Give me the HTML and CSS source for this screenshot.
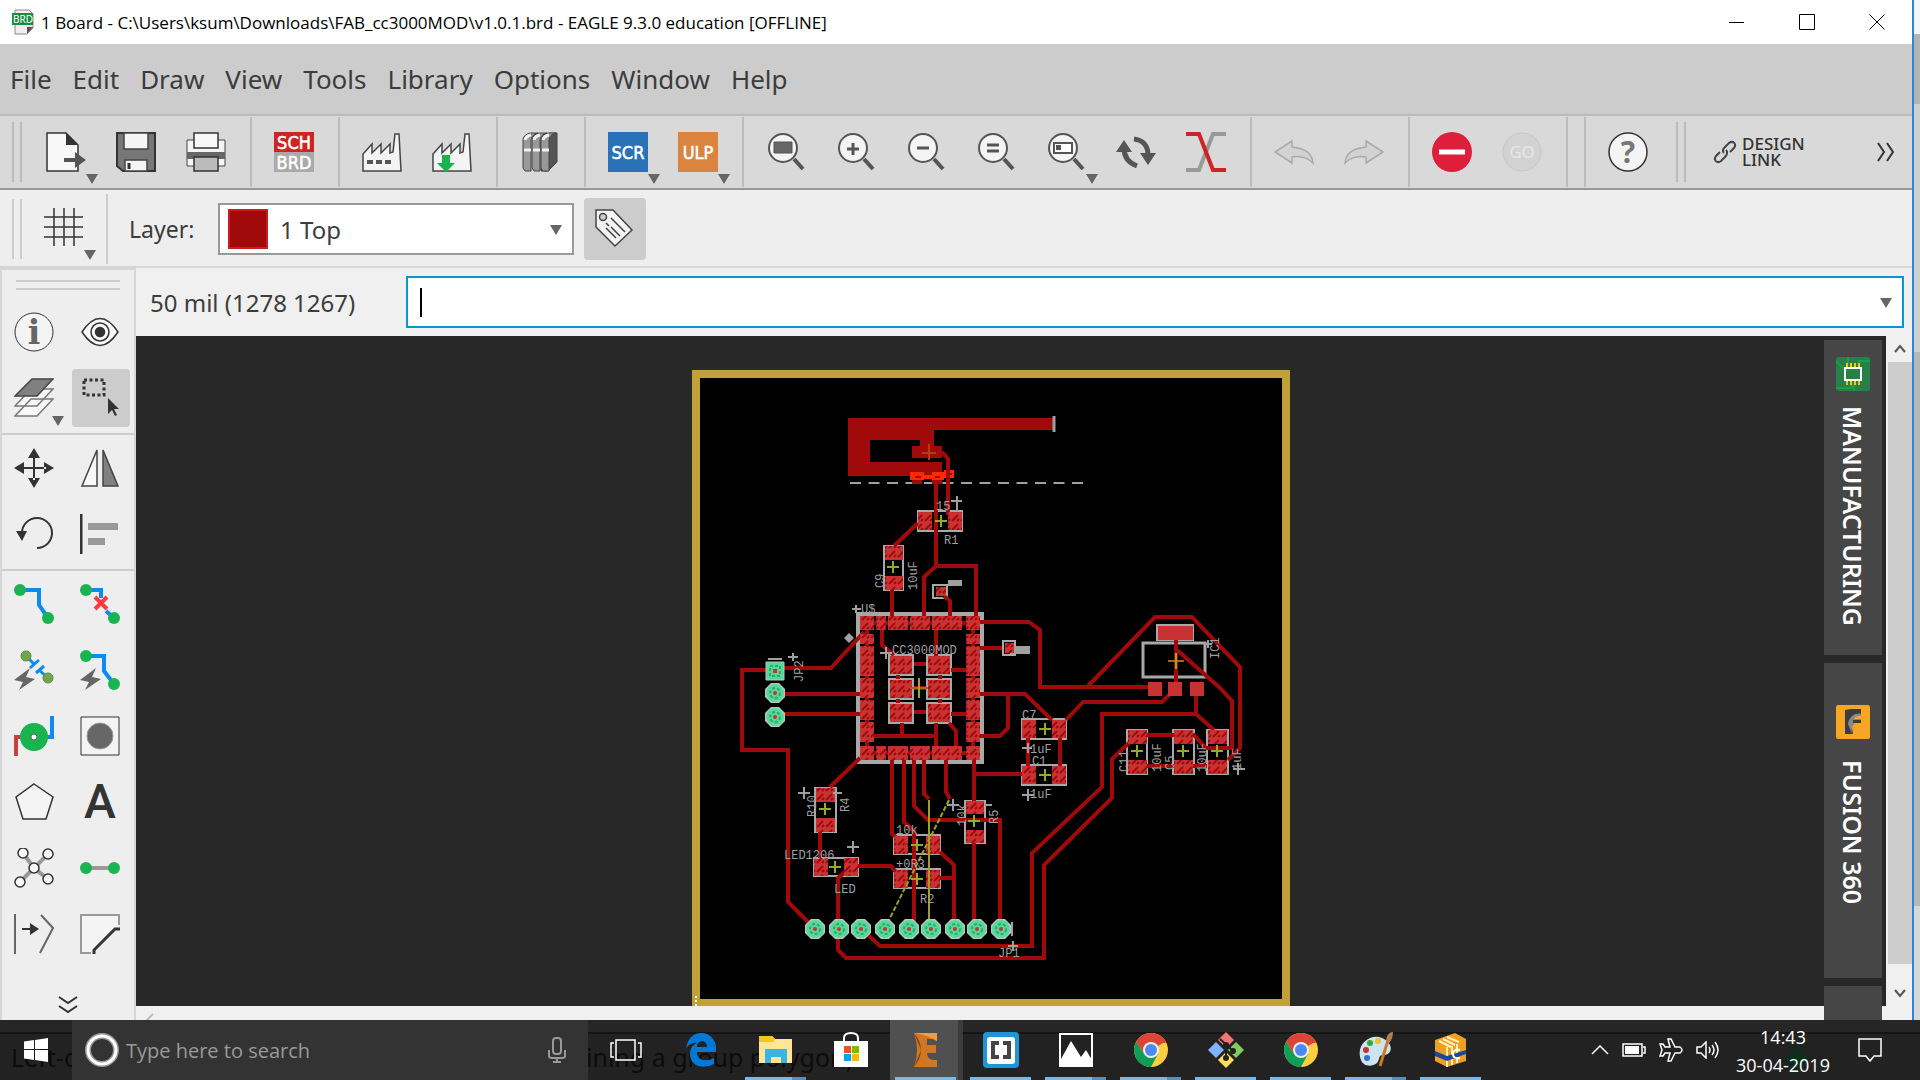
FILE: index.html
```html
<!doctype html>
<html lang="en">

<head>
  <meta charset="utf-8">
  <title>1 Board - EAGLE</title>
  <link rel="stylesheet" href="styles.css">
</head>

<body>
  <svg class="defs" aria-hidden="true">
    <symbol id="lens" viewBox="0 0 40 40">
      <circle cx="17" cy="16" r="14" fill="#f4f4f4" stroke="#555" stroke-width="2"/>
      <path d="M28 27l9 10" stroke="#555" stroke-width="4"/>
    </symbol>
    <symbol id="factory" viewBox="0 0 40 40">
      <path d="M1 39V22L10 12v9l9-9v9l9-9v9l3-1 2-18h4l2 37z" fill="#f4f4f4" stroke="#444" stroke-width="1.5"/>
    </symbol>
    <symbol id="chrome" viewBox="0 0 34 34">
      <circle cx="17" cy="17" r="17" fill="#ffcd40"/>
      <path d="M17 17L2.300 8.500A17 17 0 0 1 31.700 8.500z" fill="#dc4437"/>
      <path d="M2.300 8.500A17 17 0 0 0 17 34L24 21H10z" fill="#109d58"/>
      <path d="M2.300 8.500L10 21l7-11h15l-1-2z" fill="#dc4437"/>
      <circle cx="17" cy="17" r="8" fill="#eee"/>
      <circle cx="17" cy="17" r="6" fill="#4a8af4"/>
    </symbol>
    <symbol id="via" viewBox="-11 -11 22 22">
      <path d="M-4-10h8l6 6v8l-6 6h-8l-6-6v-8z" fill="#b8c8c0"/>
      <circle r="9" fill="#56d898"/>
      <circle r="5" fill="none" stroke="#2fa86f" stroke-width="2" stroke-dasharray="3 2"/>
      <circle r="2" fill="#c83232"/>
    </symbol>
    <symbol id="cross" viewBox="-6 -6 12 12">
      <path d="M-6 0H6M0-6V6" stroke="#96aa28" stroke-width="2"/>
    </symbol>
  </svg>

  <div class="desktop">
    <div class="window">
      <header class="titlebar">
        <svg class="doc-icon" width="22" height="26" viewBox="0 0 22 26">
          <path d="M3 1h14l4 4v14l-6 6H3z" fill="#eee" stroke="#888"/>
          <path d="M21 18h-6v7z" fill="#555"/>
          <rect y="4" width="21" height="12" fill="#1a8c42"/>
          <text x="1" y="14" font-size="10" fill="#fff">BRD</text>
        </svg>
        <h1>1 Board - C:\Users\ksum\Downloads\FAB_cc3000MOD\v1.0.1.brd - EAGLE 9.3.0 education [OFFLINE]</h1>
        <div class="window-buttons">
          <button aria-label="Minimize"><svg width="16" height="16"><path d="M0 8.500h15" stroke="#000"/></svg></button>
          <button aria-label="Maximize"><svg width="16" height="16"><path d="M.5.5h15v15H.5z" fill="none" stroke="#000"/></svg></button>
          <button aria-label="Close"><svg width="16" height="16"><path d="M.5.5l15 15M15.500.5l-15 15" stroke="#000"/></svg></button>
        </div>
      </header>

      <nav class="menubar">
        <button>File</button>
        <button>Edit</button>
        <button>Draw</button>
        <button>View</button>
        <button>Tools</button>
        <button>Library</button>
        <button>Options</button>
        <button>Window</button>
        <button>Help</button>
      </nav>

      <div class="toolbar">
        <div class="grip"></div>
        <div class="group">
          <button class="tool drop" aria-label="New"><svg viewBox="0 0 40 40"><path d="M1 1h19l12 12v26H1z" fill="#f8f8f8" stroke="#333" stroke-width="1.500"/><path d="M20 1l12 12H20z" fill="#333"/><path d="M18 26h11v-6l11 8-11 8v-6H18z" fill="#555"/></svg></button>
          <button class="tool" aria-label="Save"><svg viewBox="0 0 40 40"><path d="M1 1h38v38H7l-6-5z" fill="#777" stroke="#333" stroke-width="2"/><path d="M8 1h24v16H8zM9 28h22v11H9z" fill="#f4f4f4" stroke="#444" stroke-width="1.500"/><path d="M13 31v6" stroke="#333" stroke-width="3"/></svg></button>
          <button class="tool" aria-label="Print"><svg viewBox="0 0 40 40"><path d="M1 8h38v26H1z" fill="#f4f4f4" stroke="#444"/><path d="M1 20h38v7H1z" fill="#666"/><path d="M8 1h24v15H8z" fill="#f8f8f8" stroke="#333" stroke-width="1.500"/><path d="M8 25h24v14H8z" fill="#bbb" stroke="#333" stroke-width="1.500"/></svg></button>
        </div>
        <div class="group">
          <button class="tool" aria-label="Schematic"><svg viewBox="0 0 40 40"><path d="M0 0h40v20H0z" fill="#cf2424"/><path d="M0 20h40v20H0z" fill="#aaa"/><g class="pixel-label" font-size="18"><text x="20" y="17">SCH</text><text x="20" y="37">BRD</text></g></svg></button>
        </div>
        <div class="group">
          <button class="tool" aria-label="CAM processor"><svg viewBox="0 0 40 40"><use href="#factory"/><path d="M5 30h24" stroke="#555" stroke-width="4" stroke-dasharray="6 3"/></svg></button>
          <button class="tool" aria-label="Export CAM"><svg viewBox="0 0 40 40"><use href="#factory"/><path d="M10 23h8v8h5l-9 9-9-9h5z" fill="#18b450"/></svg></button>
        </div>
        <div class="group">
          <button class="tool" aria-label="Library"><svg viewBox="0 0 40 40" stroke="#444"><path d="M21 8l9-7h7v29l-9 9h-7z" fill="#555"/><path d="M3 8q0-5 7-7h8q-7 2-7 7v31H5l-2-3zM12 8q0-5 7-7h8q-7 2-7 7v31h-6l-2-3zM21 8q0-5 7-7h8q-7 2-7 7v31h-6l-2-3z" fill="#999"/><path d="M5 8q1-4 6-5M14 8q1-4 6-5M23 8q1-4 6-5" fill="none" stroke="#f0f0f0" stroke-width="3"/><path d="M4 18h7M13 18h7M22 18h7" stroke="#f0f0f0" stroke-width="3"/></svg></button>
        </div>
        <div class="group">
          <button class="tool drop" aria-label="Run script"><svg viewBox="0 0 40 40"><path d="M0 0h40v40H0z" fill="#2a72b8"/><text class="pixel-label" x="20" y="27" font-size="18">SCR</text></svg></button>
          <button class="tool drop" aria-label="Run ULP"><svg viewBox="0 0 40 40"><path d="M0 0h40v40H0z" fill="#db8440"/><text class="pixel-label" x="20" y="27" font-size="18">ULP</text></svg></button>
        </div>
        <div class="group">
          <button class="tool" aria-label="Fit"><svg viewBox="0 0 40 40"><use href="#lens"/><path d="M8 10h18v11H8z" fill="#666" stroke="#555"/></svg></button>
          <button class="tool" aria-label="Zoom in"><svg viewBox="0 0 40 40"><use href="#lens"/><path d="M11 17h12M17 11v12" stroke="#555" stroke-width="3"/></svg></button>
          <button class="tool" aria-label="Zoom out"><svg viewBox="0 0 40 40"><use href="#lens"/><path d="M11 16h12" stroke="#555" stroke-width="3"/></svg></button>
          <button class="tool" aria-label="Redraw"><svg viewBox="0 0 40 40"><use href="#lens"/><path d="M11 13h12M11 19h12" stroke="#555" stroke-width="3"/></svg></button>
          <button class="tool drop" aria-label="Select zoom"><svg viewBox="0 0 40 40"><use href="#lens"/><path d="M8 11h18v10H8z" fill="#fff" stroke="#555" stroke-width="2"/><path d="M10 13h5v5h-5z" fill="#555"/></svg></button>
          <button class="tool" aria-label="Refresh"><svg viewBox="0 0 40 40"><path d="M8 16c0 9 5 15 13 18M18 7c9 1 14 7 14 16" fill="none" stroke="#555" stroke-width="5"/><path d="M0 20L8 8l8 12zM24 21h16l-8 12z" fill="#555"/></svg></button>
          <button class="tool" aria-label="Ratsnest"><svg viewBox="0 0 40 40" fill="none" stroke-width="4"><path d="M0 38h13L27 2h13" stroke="#999"/><path d="M0 2h13l14 36h13" stroke="#cf2424"/></svg></button>
        </div>
        <div class="group">
          <button class="tool" aria-label="Undo" disabled><svg viewBox="0 0 40 40"><path d="M1 20L18 9v6q20 2 21 16-8-8-21-6v6z" fill="#d2d2d2" stroke="#aaa" stroke-width="1.500"/></svg></button>
          <button class="tool" aria-label="Redo" disabled><svg viewBox="0 0 40 40"><path d="M39 20L22 9v6Q2 17 1 31q8-8 21-6v6z" fill="#d2d2d2" stroke="#aaa" stroke-width="1.500"/></svg></button>
        </div>
        <div class="group">
          <button class="tool" aria-label="Stop"><svg viewBox="0 0 40 40"><circle cx="20" cy="20" r="20" fill="#de1f3c"/><path d="M7 20h26" stroke="#fff" stroke-width="5"/></svg></button>
          <button class="tool" aria-label="Go" disabled><svg viewBox="0 0 40 40"><circle cx="20" cy="20" r="19" fill="#d2d2d2" stroke="#c6c6c6"/><text x="20" y="26" font-size="17" text-anchor="middle" fill="#e8e8e8">GO</text></svg></button>
        </div>
        <div class="group empty"></div>
        <div class="group last">
          <button class="tool" aria-label="Help"><svg viewBox="0 0 40 40"><circle cx="20" cy="20" r="19" fill="#f4f4f4" stroke="#333" stroke-width="1.500"/><text x="20" y="31" font-size="30" font-weight="bold" text-anchor="middle" fill="#777">?</text></svg></button>
        </div>
        <div class="grip"></div>
        <button class="design-link">
          <svg width="24" height="24" viewBox="0 0 24 24" fill="none" stroke="#444" stroke-width="2"><path d="M11 13c-2-2-1-4 1-6l4-4c4-3 8 1 5 5l-4 4M13 10c2 2 1 5-1 7l-4 4c-4 3-8-1-5-5l4-4"/></svg>
          <span>DESIGN<br>LINK</span>
        </button>
        <button class="more" aria-label="More"><svg width="18" height="20" viewBox="0 0 18 20" fill="none" stroke="#333" stroke-width="2"><path d="M1 1l6 9-6 9M10 1l6 9-6 9"/></svg></button>
      </div>

      <div class="layerbar">
        <div class="grip"></div>
        <button class="tool drop grid-tool" aria-label="Grid"><svg viewBox="0 0 40 40"><path d="M11 1v38M21 1v38M31 1v38M1 10h39M1 20h39M1 30h39" stroke="#333" stroke-width="1.500"/></svg></button>
        <label for="layer">Layer:</label>
        <div class="layer-box">
          <span class="swatch"></span>
          <select id="layer"><option>1 Top</option></select>
        </div>
        <button class="tag" aria-label="Tags"><svg width="40" height="40" viewBox="0 0 40 40" fill="#f4f4f4" stroke="#444" stroke-width="1.500"><path d="M2 2h17l19 20-17 16L2 19z"/><circle cx="9" cy="9" r="3.500" fill="#ccc"/><path d="M17 10l14 14M12 15l3 3M17 19l9 9M12 20l10 10"/></svg></button>
      </div>

      <div class="workspace">
        <aside class="palette">
          <div class="palette-grip"></div>
          <div class="tools">
            <button aria-label="Info"><svg viewBox="0 0 40 40"><circle cx="20" cy="20" r="19" fill="#f4f4f4" stroke="#333"/><text x="20" y="32" font-family="DejaVu Serif" font-size="33" font-weight="bold" text-anchor="middle" fill="#666">i</text></svg></button>
            <button aria-label="Show"><svg viewBox="0 0 40 40" fill="#f8f8f8" stroke="#333" stroke-width="1.500"><path d="M2 20Q20-7 38 20 20 47 2 20z"/><circle cx="20" cy="20" r="9"/><circle cx="20" cy="20" r="4.500" fill="#333"/></svg></button>
            <button class="drop" aria-label="Layers"><svg viewBox="0 0 40 40" fill="#f8f8f8" stroke="#777" stroke-width="1.500"><path d="M1 38l16-17h22L23 38zM1 28l16-17h22L23 28z"/><path d="M1 18L18 1h21L23 18z" fill="#808080" stroke="#444"/></svg></button>
            <button class="on" aria-label="Group"><svg viewBox="0 0 40 40"><path d="M4 2h20v15H4z" fill="none" stroke="#333" stroke-width="3" stroke-dasharray="3 2.500"/><path d="M28 20v16l4-4 3 6 2-1-3-6h5z" fill="#333"/></svg></button>
          </div>
          <div class="tools">
            <button aria-label="Move"><svg viewBox="0 0 40 40" fill="#333"><path d="M19 8h2v24h-2zM8 19h24v2H8zM20 0l6 10H14zM20 40l6-10H14zM0 20l10-6v12zM40 20l-10-6v12z"/></svg></button>
            <button aria-label="Mirror"><svg viewBox="0 0 40 40" stroke="#444" stroke-width="1.500"><path d="M17 2v36H2z" fill="#f8f8f8"/><path d="M23 2v36h15z" fill="#808080"/></svg></button>
            <button aria-label="Rotate"><svg viewBox="0 0 40 40"><path d="M8 19a15 15 0 1 1 15 15" fill="none" stroke="#333" stroke-width="2"/><path d="M2 17h11L8 27z" fill="#333"/></svg></button>
            <button aria-label="Align"><svg viewBox="0 0 40 40"><path d="M1 0v40" stroke="#333" stroke-width="3"/><path d="M8 9h30v7H8zM8 24h17v7H8z" fill="#999"/></svg></button>
          </div>
          <div class="tools">
            <button aria-label="Route"><svg viewBox="0 0 40 40"><path d="M6 6h19v15l9 13" fill="none" stroke="#0a8cf0" stroke-width="4"/><g fill="#18b450"><circle cx="6" cy="6" r="6"/><circle cx="34" cy="34" r="6"/></g></svg></button>
            <button aria-label="Ripup"><svg viewBox="0 0 40 40"><path d="M6 6h15v8m5 13l8 7" fill="none" stroke="#0a8cf0" stroke-width="4"/><g fill="#18b450"><circle cx="6" cy="6" r="6"/><circle cx="34" cy="34" r="6"/></g><path d="M15 13l12 12M27 13L15 25" stroke="#ff3b3b" stroke-width="4"/></svg></button>
            <button aria-label="Fanout"><svg viewBox="0 0 40 40"><path d="M12 6l8 8m5 6l9 8M16 18l9-8M22 23l8-7" stroke="#0a8cf0" stroke-width="3"/><g fill="#70a848" stroke="#608840"><circle cx="12" cy="6" r="5"/><circle cx="34" cy="28" r="5"/></g><path d="M16 18L0 30l9 2-4 8 16-11-9-2z" fill="#666"/></svg></button>
            <button aria-label="Autorouter"><svg viewBox="0 0 40 40"><path d="M6 6h18v15l10 13" fill="none" stroke="#0a8cf0" stroke-width="4"/><g fill="#18b450"><circle cx="6" cy="6" r="6"/><circle cx="34" cy="34" r="6"/></g><path d="M16 18L0 30l9 2-4 8 16-11-9-2z" fill="#666"/></svg></button>
            <button aria-label="Via"><svg viewBox="0 0 40 40" fill="none" stroke-width="4"><path d="M2 40V21h8" stroke="#c84040"/><path d="M38 0v21h-8" stroke="#0a8cf0"/><circle cx="20" cy="21" r="14" fill="#18b450"/><circle cx="20" cy="21" r="3" fill="#fff" stroke="#6a7040" stroke-width="1"/></svg></button>
            <button aria-label="Hole"><svg viewBox="0 0 40 40"><path d="M1 1h38v38H1z" fill="#f4f4f4" stroke="#333"/><circle cx="20" cy="20" r="13" fill="#666" stroke="#999"/></svg></button>
            <button aria-label="Polygon"><svg viewBox="0 0 40 40"><path d="M20 2l19 13-7 22H9L2 15z" fill="#f4f4f4" stroke="#333" stroke-width="1.500"/></svg></button>
            <button class="letter" aria-label="Text">A</button>
            <button aria-label="Ratsnest"><svg viewBox="0 0 40 40"><path d="M9 5l11 15L6 34M34 6L20 20l14 11" fill="none" stroke="#999" stroke-width="4"/><g fill="#f8f8f8" stroke="#333" stroke-width="1.500"><circle cx="9" cy="5" r="5"/><circle cx="34" cy="6" r="5"/><circle cx="20" cy="20" r="5"/><circle cx="6" cy="34" r="5"/><circle cx="34" cy="31" r="5"/></g></svg></button>
            <button aria-label="Signal"><svg viewBox="0 0 40 40"><path d="M6 20h28" stroke="#999" stroke-width="4"/><g fill="#18b450"><circle cx="6" cy="20" r="6"/><circle cx="34" cy="20" r="6"/></g></svg></button>
            <button aria-label="Split"><svg viewBox="0 0 40 40" fill="none" stroke="#666" stroke-width="2"><path d="M1 0v40M27 1l12 13-13 25"/><path d="M8 15h10" stroke="#333"/><path d="M16 9l9 6-9 6z" fill="#333" stroke="none"/></svg></button>
            <button aria-label="Miter"><svg viewBox="0 0 40 40" fill="none"><path d="M39 11V1H1v38h10" fill="#f4f4f4" stroke="#999" stroke-width="2"/><path d="M14 40v-4l21-21h5" stroke="#333" stroke-width="3"/></svg></button>
          </div>
          <button class="more-tools" aria-label="More tools"><svg width="20" height="18" viewBox="0 0 20 18" fill="none" stroke="#333" stroke-width="2"><path d="M1 1l9 6 9-6M1 10l9 6 9-6"/></svg></button>
        </aside>

        <main class="editor">
          <div class="command-row">
            <label for="command">50 mil (1278 1267)</label>
            <div class="command-box"><input id="command" type="text"><span class="caret"></span></div>
          </div>
          <div class="view">
            <div class="canvas">
              <svg class="board" width="620" height="646" viewBox="0 0 620 646">
                <defs>
                  <pattern id="hatch" width="9" height="9" patternUnits="userSpaceOnUse">
                    <path d="M0 0h9v9H0z" fill="#c83232"/>
                    <path d="M1 8l6-6M6 8l2-2" stroke="#a00a0a" stroke-width="2"/>
                  </pattern>
                </defs>
                <path d="M6 14H596V643H6z" fill="#000" stroke="#c0a038" stroke-width="8"/>
                <path d="M6 636v10" stroke="#fff" stroke-width="2" stroke-dasharray="2 2"/>

                <!-- antenna -->
                <path d="M158 58H364V70H244V86H252V98H222V86H230V80H180V102H252V116H158z" fill="#a00a0a"/>
                <path d="M364 56v16" stroke="#a0a0a0" stroke-width="3"/>
                <path d="M160 123H394" stroke="#a0a0a0" stroke-width="2" stroke-dasharray="11 7.500"/>
                <path d="M222 118h10v6h-10zM242 118h10v6h-10z" fill="#a00a0a"/>
                <path d="M220 112h14v8h-14zM242 112h12v8h-12zM254 110h10v8h-10zM232 115h12v4h-12z" fill="#ff2a00"/>
                <path d="M225 117h6M245 117h5M256 114h6" stroke="#a00a0a" stroke-width="2"/>
                <path d="M232 93h14M239 84v16" stroke="#b83c10" stroke-width="2"/>

                <!-- package outlines -->
                <g fill="none" stroke="#a8a8a8" stroke-width="2">
                  <path d="M228 151h44v20h-44zM194 186h19v44h-19zM243 225h14v13h-14zM125 428h21v44h-21zM124 498h44v18h-44zM204 475h46v19h-46zM204 509h46v19h-46zM275 441h20v42h-20zM332 359h44v20h-44zM332 405h44v20h-44zM437 370h20v44h-20zM483 370h21v44h-21zM517 370h21v44h-21zM313 281h12v14h-12z"/>
                  <path d="M168 254h124v148H168z" stroke-width="4"/>
                  <path d="M453 283h62v34h-62z" stroke-width="3"/>
                  <path d="M467 265h36v15h-36z"/>
                  <path d="M199 295h24v20h-24zM237 295h24v20h-24zM199 319h24v20h-24zM237 319h24v20h-24zM199 343h24v20h-24zM237 343h24v20h-24z"/>
                </g>
                <path d="M154 278l5-5 5 5-5 5zM258 220h14v6h-14zM320 286h20v8h-20z" fill="#a0a0a0"/>

                <!-- routed signals -->
                <g fill="none" stroke="#a00a0a" stroke-width="4">
                  <path d="M252 92l6 7v56M246 124v82h40v50M246 206l-12 11v39M228 163l-24 23M202 230v26M254 236l6 5v15"/>
                  <path d="M174 272l-33 36H85M94 334h76M94 354h76M76 310H52v80h46v152l22 22"/>
                  <path d="M192 270v15l12 10M246 270v26M224 304h12M224 328h12M224 352h12M261 310h16M261 354h16M208 315v4M250 315v4M208 339v4M250 339v4M212 363v13M184 376h62M246 363v23M259 363l7 8v15M184 263h92M184 393h92M177 270v116M283 270v116"/>
                  <path d="M290 262h49l11 8v57h108M290 288h22M290 334h45l27 26M318 334v34l-8 8h-20M397 327l68-70h37l48 50v81l-12 12M376 360l17-18h79l8-8"/>
                  <path d="M486 280v42M487 290l43 38 12 13v47h-26l-12-13h-47M457 406h60M338 378v28M370 378v28M284 414h48"/>
                  <path d="M170 398l-30 29M130 472v26M168 506h33l5 6M155 512l-7 6v72l8 8h198v-93l68-67v-39l18-17"/>
                  <path d="M178 575l12 11h152v-93l70-66v-73h94v-18M506 354l18 16"/>
                  <path d="M202 400v74l4 3M214 400v62l10 9v92M224 400v46l14 14h72v102M234 400v34l5 5M256 400v32l4 7M250 492l14 13v57M250 518h14M284 400v41M284 483v79"/>
                </g>

                <!-- pads -->
                <g fill="url(#hatch)">
                  <path d="M228 152h14v18h-14zM258 152h14v18h-14zM195 186h18v14h-18zM195 216h18v14h-18zM246 227h10v9h-10zM315 283h9v10h-9z"/>
                  <path d="M170 256h14v14h-14zM186 256h10v14h-10zM198 256h20v14h-20zM220 256h20v14h-20zM242 256h30v14h-30zM276 256h14v14h-14z"/>
                  <path d="M170 386h14v14h-14zM186 386h10v14h-10zM198 386h20v14h-20zM220 386h20v14h-20zM242 386h30v14h-30zM276 386h14v14h-14z"/>
                  <path d="M170 274h14v10h-14zM170 286h14v30h-14zM170 318h14v20h-14zM170 340h14v20h-14zM170 362h14v20h-14z"/>
                  <path d="M276 274h14v10h-14zM276 286h14v30h-14zM276 318h14v20h-14zM276 340h14v20h-14zM276 362h14v20h-14z"/>
                  <path d="M200 296h22v18h-22zM238 296h22v18h-22zM200 320h22v18h-22zM238 320h22v18h-22zM200 344h22v18h-22zM238 344h22v18h-22z"/>
                  <path d="M126 428h19v14h-19zM126 458h19v14h-19zM124 498h14v18h-14zM154 498h14v18h-14zM204 476h14v18h-14zM236 476h14v18h-14zM204 510h14v18h-14zM236 510h14v18h-14zM276 441h18v13h-18zM276 470h18v13h-18z"/>
                  <path d="M332 360h14v18h-14zM362 360h14v18h-14zM332 406h14v18h-14zM362 406h14v18h-14zM438 370h19v14h-19zM438 400h19v14h-19zM484 370h19v14h-19zM484 400h19v14h-19zM518 370h19v14h-19zM518 400h19v14h-19z"/>
                </g>
                <path d="M468 266h35v14h-35zM458 322h14v14h-14zM478 322h14v14h-14zM500 322h14v14h-14z" fill="#c83232"/>

                <g>
                  <use href="#cross" x="245" y="155" width="12" height="12"/>
                  <use href="#cross" x="197" y="201" width="12" height="12"/>
                  <use href="#cross" x="129" y="443" width="12" height="12"/>
                  <use href="#cross" x="139" y="501" width="12" height="12"/>
                  <use href="#cross" x="221" y="479" width="12" height="12"/>
                  <use href="#cross" x="221" y="513" width="12" height="12"/>
                  <use href="#cross" x="278" y="455" width="12" height="12"/>
                  <use href="#cross" x="349" y="363" width="12" height="12"/>
                  <use href="#cross" x="349" y="409" width="12" height="12"/>
                  <use href="#cross" x="441" y="385" width="12" height="12"/>
                  <use href="#cross" x="487" y="385" width="12" height="12"/>
                  <use href="#cross" x="521" y="385" width="12" height="12"/>
                  <path d="M478 301h16M220 328h18" stroke="#b06018" stroke-width="2"/>
                  <path d="M486 293v16M229 318v20" stroke="#96aa28" stroke-width="2"/>
                </g>

                <!-- airwires -->
                <path d="M239 440v120" stroke="#a0a028" stroke-width="2"/>
                <path d="M259 440l-60 120" stroke="#a0a028" stroke-width="2" stroke-dasharray="5 2"/>

                <path d="M76 302h18v18H76z" fill="#56d898" stroke="#b8c8c0"/>
                <path d="M80 306h10v10H80z" fill="none" stroke="#2fa86f" stroke-width="2" stroke-dasharray="3 2"/>
                <path d="M83 309h4v4h-4z" fill="#c83232"/>
                <use href="#via" x="74" y="322" width="22" height="22"/>
                <use href="#via" x="74" y="346" width="22" height="22"/>
                <use href="#via" x="114" y="558" width="22" height="22"/>
                <use href="#via" x="138" y="558" width="22" height="22"/>
                <use href="#via" x="160" y="558" width="22" height="22"/>
                <use href="#via" x="184" y="558" width="22" height="22"/>
                <use href="#via" x="208" y="558" width="22" height="22"/>
                <use href="#via" x="230" y="558" width="22" height="22"/>
                <use href="#via" x="254" y="558" width="22" height="22"/>
                <use href="#via" x="276" y="558" width="22" height="22"/>
                <use href="#via" x="300" y="558" width="22" height="22"/>

                <!-- origins and silkscreen names -->
                <path d="M261 141h11M267 136v15M162 249h9M166 245v8M98 297h10M103 293v8M108 433h12M114 427v12M143 433h9M157 487h12M163 481v12M257 445h12M263 439v12M294 445h8M190 293h12M196 287v12M332 435h12M338 429v12M332 388h10M338 383v10M514 284h8M518 280v8M543 409h12M548 403v12M318 586h10M323 581v10M78 299h14M322 562v14" stroke="#a0a0a0" stroke-width="2"/>
                <g class="silk">
                  <text x="202" y="294">CC3000MOD</text>
                  <text x="246" y="150">15</text>
                  <text x="254" y="184">R1</text>
                  <text x="171" y="253">U$</text>
                  <text x="340" y="393">1uF</text>
                  <text x="342" y="405">C1</text>
                  <text x="340" y="438">1uF</text>
                  <text x="332" y="359">C7</text>
                  <text x="94" y="499">LED1206</text>
                  <text x="144" y="533">LED</text>
                  <text x="206" y="474">10k</text>
                  <text x="206" y="508">+0R3</text>
                  <text x="230" y="543">R2</text>
                  <text x="308" y="597">JP1</text>
                  <text transform="translate(194 228) rotate(-90)">C9</text>
                  <text transform="translate(227 230) rotate(-90)">10uF</text>
                  <text transform="translate(113 322) rotate(-90)">JP2</text>
                  <text transform="translate(126 457) rotate(-90)">R10</text>
                  <text transform="translate(159 452) rotate(-90)">R4</text>
                  <text transform="translate(276 466) rotate(-90)">10k</text>
                  <text transform="translate(308 464) rotate(-90)">R5</text>
                  <text transform="translate(529 299) rotate(-90)">IC1</text>
                  <text transform="translate(438 412) rotate(-90)">C11</text>
                  <text transform="translate(471 412) rotate(-90)">10uF</text>
                  <text transform="translate(484 410) rotate(-90)">C5</text>
                  <text transform="translate(516 412) rotate(-90)">10uF</text>
                  <text transform="translate(551 410) rotate(-90)">1uF</text>
                </g>
              </svg>
            </div>
            <div class="vscroll">
              <button aria-label="Scroll up"><svg width="12" height="10" viewBox="0 0 12 10"><path d="M1 8l5-6 5 6" fill="none" stroke="#555" stroke-width="2"/></svg></button>
              <div class="thumb"></div>
              <button aria-label="Scroll down"><svg width="12" height="10" viewBox="0 0 12 10"><path d="M1 2l5 6 5-6" fill="none" stroke="#555" stroke-width="2"/></svg></button>
            </div>
            <div class="side-tabs">
              <button>
                <svg width="34" height="34" viewBox="0 0 34 34"><rect width="34" height="34" rx="3" fill="#278048"/><path d="M0 4l8 8M12 0v8M0 31h16v-6M22 4h12M18 34v-6" stroke="#18a040" stroke-width="2" fill="none"/><path d="M11 6v22M15 6v22M19 6v22M23 6v22" stroke="#f0c818" stroke-width="2"/><path d="M9 11h16v12H9z" fill="#278048" stroke="#fff" stroke-width="2"/></svg>
                <span>MANUFACTURING</span>
              </button>
              <button class="fusion">
                <svg width="34" height="34" viewBox="0 0 34 34"><rect width="34" height="34" rx="2" fill="#f5a623"/><path d="M9 5l6-1h10v5c-8-1-10 3-10 8l2 12H9z" fill="#3c3c3c"/><path d="M25 9c-8-1-12 4-13 10l4 10c-1-5 0-8 3-11h6v-4h-7c1-3 4-3 7-3z" fill="#888"/><path d="M17 15h8v3h-8z" fill="#3c3c3c"/></svg>
                <span>FUSION 360</span>
              </button>
              <button class="cut" aria-label="Next panel"></button>
            </div>
          </div>
          <div class="hscroll"><svg width="10" height="12" viewBox="0 0 10 12"><path d="M9 1L2 8l3 4" fill="none" stroke="#bbb" stroke-width="2"/></svg></div>
        </main>
      </div>
    </div>
    <div class="behind"></div>
  </div>

  <footer class="taskbar">
    <!-- status line showing through the translucent bar -->
    <p class="hint"><span>Left-c</span> <span>defining a group polygon)</span></p>
    <button class="start" aria-label="Start"><svg width="24" height="24" viewBox="0 0 24 24"><path d="M0 3.500l10-1.500v9H0zM11 2l13-2v11H11zM0 12h10v10L0 20.500zM11 12h13v12l-13-2z" fill="#fff"/></svg></button>
    <div class="search">
      <svg width="34" height="34" viewBox="0 0 34 34"><circle cx="17" cy="17" r="14" fill="none" stroke="#999" stroke-width="6"/><circle cx="17" cy="17" r="14" fill="none" stroke="#fff" stroke-width="3"/></svg>
      <input type="text" placeholder="Type here to search" aria-label="Type here to search">
      <svg width="18" height="26" viewBox="0 0 18 26" fill="none" stroke="#999" stroke-width="2"><rect x="5" y="1" width="8" height="16" rx="3"/><path d="M1 13v6q0 2 3 2h10q3 0 3-2v-6M9 21v4M5 25h8"/></svg>
    </div>
    <div class="apps">
      <button aria-label="Task view"><svg width="32" height="22" viewBox="0 0 32 22" fill="none" stroke="#fff" stroke-width="1.500"><path d="M6 1h19v20H6zM4 4H1v14h3M28 4h3v14h-3"/></svg></button>
      <button aria-label="Edge"><svg width="30" height="34" viewBox="0 0 30 34"><path d="M0 15C2 5 8 0 15 0c10 0 15 8 15 15v4H11c0 9 10 10 17 6v6c-11 6-24 2-24-10 0-6 3-9 7-11-3-1-8 1-11 5zm11-1h10c0-8-10-7-10 0z" fill="#0078d7"/></svg></button>
      <button class="open multi" aria-label="File Explorer"><svg width="34" height="28" viewBox="0 0 34 28"><path d="M0 0h13l3 3h17v24H0z" fill="#ffe596"/><path d="M0 0h13l3 3-2 3H0z" fill="#f3c52b"/><path d="M6 13h22v14h-6v-6H12v6H6z" fill="#38b4e8"/></svg></button>
      <button aria-label="Store"><svg width="34" height="36" viewBox="0 0 34 36"><path d="M10 10V6q0-5 7-5t7 5v4" fill="none" stroke="#fff" stroke-width="2"/><path d="M0 9h34v26H0z" fill="#fff"/><path d="M10 14h7v7h-7z" fill="#f25022"/><path d="M18 14h7v7h-7z" fill="#7fba00"/><path d="M10 22h7v7h-7z" fill="#00a4ef"/><path d="M18 22h7v7h-7z" fill="#ffb900"/></svg></button>
      <button class="open active" aria-label="EAGLE"><svg width="24" height="34" viewBox="0 0 24 34"><path d="M0 0h23v8l-4-2h-6v6h9v8h-9q0 8 10 7v7H0q6-17 0-34z" fill="#cf7724"/><path d="M0 0q14 17 0 34l7-17z" fill="#8a4610"/><path d="M0 0h23v8q-10-6-23-8z" fill="#ef9c42"/></svg></button>
      <button class="open" aria-label="Brackets"><svg width="36" height="36" viewBox="0 0 36 36"><rect width="36" height="36" rx="4" fill="#1e96d4"/><rect x="4" y="5" width="28" height="27" rx="3" fill="#fff"/><path d="M16 11h-6v14h6M20 11h6v14h-6" fill="none" stroke="#444" stroke-width="4"/></svg></button>
      <button class="open multi" aria-label="Photos"><svg width="34" height="34" viewBox="0 0 34 34"><path d="M1 1h32v32H1z" fill="#222" stroke="#fff" stroke-width="2"/><path d="M2 26L12 8l10 16 5-7 6 10v6H2z" fill="#fff"/></svg></button>
      <button class="open multi" aria-label="Chrome"><svg width="34" height="34"><use href="#chrome"/></svg></button>
      <button class="open" aria-label="Git"><svg width="36" height="36" viewBox="0 0 36 36"><path d="M18 0l8 8-8 8-8-8z" fill="#f47575"/><path d="M28 10l8 8-8 8-8-8z" fill="#84cc58"/><path d="M8 10l8 8-8 8-8-8z" fill="#80b3ff"/><path d="M18 20l8 8-8 8-8-8z" fill="#ffdc5a"/><path d="M12 7l13 12M18 13v14" stroke="#222" stroke-width="2"/><g fill="#222"><circle cx="18" cy="13" r="3"/><circle cx="25" cy="19" r="3"/><circle cx="18" cy="26" r="3"/></g></svg></button>
      <button class="open" aria-label="Chrome"><svg width="34" height="34"><use href="#chrome"/></svg></button>
      <button class="open multi" aria-label="Paint"><svg width="36" height="36" viewBox="0 0 36 36"><path d="M3 28C-3 13 12 1 24 6s11 17 1 17c-5 0-3 5-6 8S6 36 3 28z" fill="#cce3f2"/><g><circle cx="8" cy="18" r="3" fill="#d03030"/><circle cx="12" cy="11" r="3" fill="#38a838"/><circle cx="20" cy="9" r="3" fill="#f0c030"/><circle cx="9" cy="26" r="3" fill="#3070d0"/></g><path d="M31 5L22 34" stroke="#cc7a24" stroke-width="3"/><path d="M28 9q1-9 7-9 0 7-4 11z" fill="#b08050"/></svg></button>
      <button class="open" aria-label="Archive"><svg width="32" height="34" viewBox="0 0 32 34"><path d="M0 7L20 0l11 6v22L12 34 0 28z" fill="#f0a020"/><path d="M12 14v20M4 8l12 6M8 6l12 6M12 4l12 5M17 13v19M22 11v19" stroke="#fff0c0" stroke-width="2"/><path d="M0 18l12 5 19-6v4l-19 7-12-5z" fill="#1848a0"/><path d="M25 17q-7-1-7 4t7 4" fill="none" stroke="#fff" stroke-width="2"/></svg></button>
    </div>
    <div class="tray">
      <svg width="18" height="10" viewBox="0 0 18 10"><path d="M1 9l8-8 8 8"/></svg>
      <svg width="24" height="14" viewBox="0 0 24 14"><path d="M1 1h19v12H1zM21 4h2v6h-2"/><rect x="3" y="3" width="14" height="8" fill="#fff"/></svg>
      <svg width="24" height="24" viewBox="0 0 24 24"><path d="M9 1h3l4 8h5q4 3 0 6h-5l-4 8H9l2-8H6l-2 3H1l2-6-2-6h3l2 3h5z"/></svg>
      <svg width="24" height="18" viewBox="0 0 24 18"><path d="M1 6h4l5-5v16l-5-5H1zM13 6q2 3 0 6M16 4q4 5 0 10M19 1q6 8 0 16"/></svg>
    </div>
    <div class="clock">
      <svg class="bolt" width="30" height="40" viewBox="0 0 30 40"><path d="M26 0L0 24h12L8 40l22-24H16z" fill="#08301a"/></svg>
      <span>14:43<br>30-04-2019</span>
    </div>
    <button class="notify" aria-label="Notifications"><svg width="24" height="24" viewBox="0 0 24 24"><path d="M1 1h22v17h-7l-4 5-4-5H1z" fill="none" stroke="#fff" stroke-width="1.500"/></svg></button>
  </footer>
</body>

</html>
```

FILE: styles.css
```css
* {
  box-sizing: border-box;
}

body {
  margin: 0;
  height: 100vh;
  display: grid;
  grid-template-rows: minmax(0, 1fr) 60px;
  overflow: hidden;
  background: #222;
  color: #3c3c3c;
  font-family: "Noto Sans", sans-serif;
  font-size: 24px;
}

button {
  padding: 0;
  border: 0;
  background: none;
  color: inherit;
  font: inherit;
}

svg {
  display: block;
  flex: none;
}

.defs {
  position: absolute;
  width: 0;
  height: 0;
}

.desktop {
  display: flex;
  min-height: 0;
}

.window {
  flex: 1;
  min-width: 0;
  display: flex;
  flex-direction: column;
  background: #f0f0f0;
  border-right: 2px solid #2a86d8;
}

.behind {
  width: 6px;
  background: linear-gradient(#f4f4f4 34px, #b4b4b4 34px, #b4b4b4 104px, #d0d0d0 104px, #d0d0d0 352px, #b8b8b8 352px, #b8b8b8 906px, #d8d8d8 906px);
}

/* title and menu */
.titlebar {
  display: flex;
  align-items: center;
  height: 44px;
  padding-left: 12px;
  background: #fff;
}

.titlebar h1 {
  flex: 1;
  margin: 0 0 0 7px;
  color: #000;
  font-family: "Open Sans", sans-serif;
  font-size: 17px;
  font-weight: normal;
  white-space: nowrap;
}

.window-buttons {
  display: flex;
}

.window-buttons button {
  display: grid;
  place-items: center;
  width: 70px;
  height: 44px;
}

.menubar {
  display: flex;
  gap: 21px;
  height: 72px;
  padding-left: 10px;
  background: #cccccc;
  border-bottom: 2px solid #bbb;
  font-size: 26px;
}

/* toolbars */
.toolbar,
.layerbar {
  display: flex;
  align-items: center;
  padding-left: 12px;
}

.toolbar {
  height: 74px;
  background: #d9d9d9;
  border-bottom: 2px solid #999;
}

.grip {
  flex: none;
  width: 10px;
  height: 60px;
  border: solid #bbb;
  border-width: 0 2px;
}

.group {
  display: flex;
  align-items: center;
  height: 70px;
  padding: 0 9px 0 7px;
  border-right: 2px solid #bbb;
}

.group.empty {
  width: 18px;
}

.group.last {
  border: 0;
  padding-right: 13px;
}

.grip + .group {
  padding-left: 9px;
}

.tool {
  position: relative;
  display: grid;
  place-items: center;
  width: 70px;
  height: 66px;
}

.tool svg,
.tools svg {
  width: 40px;
  height: 40px;
}

.drop::after,
.layer-box::after,
.command-box::after {
  content: "";
  position: absolute;
  border: solid transparent;
  border-width: 10px 6px 0;
  border-top-color: #666;
}

.drop::after {
  right: 3px;
  bottom: 1px;
}

.pixel-label {
  fill: #fff;
  stroke: #fff;
  stroke-width: 0.5px;
  text-anchor: middle;
  font-family: "DejaVu Sans Condensed", "DejaVu Sans", sans-serif;
}

.design-link {
  display: flex;
  align-items: center;
  gap: 5px;
  margin-left: 27px;
  color: #333;
  font-size: 17px;
  font-weight: 500;
  line-height: 16px;
  text-align: left;
}

.more {
  margin: 0 17px 0 auto;
}

.layerbar {
  height: 78px;
  padding-top: 2px;
  background: #eee;
  border-bottom: 2px solid #d6d6d6;
}

.layerbar .grip {
  border-color: #ccc;
}

.grid-tool {
  width: 86px;
  height: 70px;
  padding: 0 2px 4px 0;
  border-right: 2px solid #ccc;
}

.grid-tool::after {
  right: 10px;
  bottom: 4px;
}

.layerbar label {
  width: 110px;
  padding-left: 21px;
  font-size: 23px;
}

.layer-box {
  position: relative;
  width: 356px;
}

.layer-box select {
  width: 100%;
  height: 52px;
  padding: 0 60px;
  appearance: none;
  background: #fff;
  border: 2px solid #999;
  border-radius: 0;
  color: inherit;
  font: inherit;
}

.layer-box::after {
  top: 22px;
  right: 12px;
}

.swatch {
  position: absolute;
  top: 6px;
  left: 10px;
  width: 40px;
  height: 40px;
  background: #a00a0a;
  border: 2px solid #c81e1e;
}

.tag {
  display: grid;
  place-items: center;
  width: 62px;
  height: 62px;
  margin-left: 10px;
  padding: 0 2px 2px 0;
  background: #cccccc;
  border-radius: 4px;
}

/* drawing tools down the left */
.workspace {
  flex: 1;
  min-height: 0;
  display: flex;
}

.palette {
  width: 136px;
  overflow: hidden;
  background: #eee;
  border: solid #d6d6d6;
  border-width: 2px 2px 0;
}

.palette-grip {
  height: 10px;
  margin: 10px 14px 9px;
  border: solid #ccc;
  border-width: 2px 0;
}

.tools {
  display: grid;
  grid-template-columns: 66px 66px;
  padding-bottom: 2px;
  border-bottom: 2px solid #ccc;
}

.tools:nth-last-child(2) {
  border: 0;
}

.tools button {
  position: relative;
  display: grid;
  place-items: center;
  width: 58px;
  height: 58px;
  margin: 4px;
  padding-right: 2px;
  border-radius: 4px;
}

.tools .on {
  background: #cccccc;
}

.tools .drop::after {
  right: 0;
}

.tools .letter {
  color: #333;
  font-family: Roboto, sans-serif;
  font-size: 48px;
  font-weight: 500;
  line-height: 58px;
}

.more-tools {
  display: block;
  margin: 27px auto 0;
}

/* editor */
.editor {
  flex: 1;
  min-width: 0;
  display: flex;
  flex-direction: column;
}

.command-row {
  display: flex;
  align-items: center;
  height: 68px;
  padding: 0 8px 0 14px;
}

.command-row label {
  width: 256px;
}

.command-box {
  position: relative;
  flex: 1;
}

.command-box input {
  display: block;
  width: 100%;
  height: 52px;
  padding: 0 13px;
  background: #fff;
  border: 2px solid #0696d7;
  font: inherit;
}

.command-box::after {
  top: 22px;
  right: 12px;
}

.caret {
  position: absolute;
  top: 12px;
  left: 14px;
  width: 2px;
  height: 29px;
  background: #000;
}

.view {
  position: relative;
  flex: 1;
  min-height: 0;
  display: flex;
}

.canvas {
  flex: 1;
  display: flex;
  justify-content: center;
  padding: 24px 22px 0 0;
  overflow: hidden;
  background: #282828;
}

.silk {
  fill: #a0a0a0;
  font-family: "Liberation Mono", monospace;
  font-size: 12px;
}

.vscroll {
  display: flex;
  flex-direction: column;
  width: 26px;
  padding-left: 2px;
}

.vscroll button {
  display: grid;
  place-items: center;
  height: 26px;
}

.thumb {
  flex: 1;
  margin-bottom: 16px;
  background: #cdcdcd;
}

.side-tabs {
  position: absolute;
  top: 4px;
  right: 30px;
  display: flex;
  flex-direction: column;
  gap: 8px;
}

.side-tabs button {
  display: flex;
  flex-direction: column;
  align-items: center;
  gap: 15px;
  width: 58px;
  height: 315px;
  padding-top: 17px;
  background: #464646;
  color: #fff;
  font-size: 25px;
  font-weight: 600;
}

.side-tabs span {
  writing-mode: vertical-rl;
}

.side-tabs .fusion {
  gap: 21px;
  padding-top: 42px;
}

.side-tabs .cut {
  height: 36px;
}

.hscroll {
  height: 14px;
  padding: 7px 0 0 8px;
  overflow: hidden;
}

/* taskbar */
.taskbar {
  position: relative;
  display: flex;
  min-width: 0;
  background: linear-gradient(#262626 12px, #151515 12px, #151515 14px, #222 14px);
  color: #fff;
}

.hint {
  position: absolute;
  left: 11px;
  top: 20px;
  width: 842px;
  margin: 0;
  display: flex;
  justify-content: space-between;
  white-space: nowrap;
  color: #0c0c0c;
  font-size: 25px;
}

.start {
  position: relative;
  display: grid;
  place-items: center;
  width: 72px;
}

.search {
  position: relative;
  display: flex;
  align-items: center;
  width: 516px;
  padding: 0 22px 0 13px;
  background: #333;
}

.search input {
  flex: 1;
  min-width: 0;
  padding: 0 7px;
  background: none;
  border: 0;
  font-family: "Open Sans", sans-serif;
  font-size: 20px;
}

.search input::placeholder {
  color: #999;
}

.apps {
  position: relative;
  display: flex;
}

.apps button {
  position: relative;
  display: grid;
  place-items: center;
  width: 75px;
}

.apps .active {
  background: linear-gradient(90deg, transparent 2px, #505050 2px, #505050 70px, #3c3c3c 70px);
}

.apps .open::after {
  content: "";
  position: absolute;
  left: 7px;
  right: 7px;
  bottom: 0;
  height: 3px;
  background: #76b9ed;
}

.apps .multi::after {
  background: linear-gradient(90deg, #76b9ed 47px, #5a8db8 47px);
}

.tray {
  display: flex;
  align-items: center;
  gap: 13px;
  margin-left: auto;
}

.tray path {
  fill: none;
  stroke: #fff;
  stroke-width: 1.5px;
}

.clock {
  position: relative;
  width: 126px;
  padding-top: 3px;
  font-family: "Open Sans", sans-serif;
  font-size: 18px;
  line-height: 28px;
  text-align: center;
}

.clock span {
  position: relative;
}

.bolt {
  position: absolute;
  top: 18px;
  left: 62px;
}

.notify {
  width: 74px;
  padding-left: 12px;
}
```
